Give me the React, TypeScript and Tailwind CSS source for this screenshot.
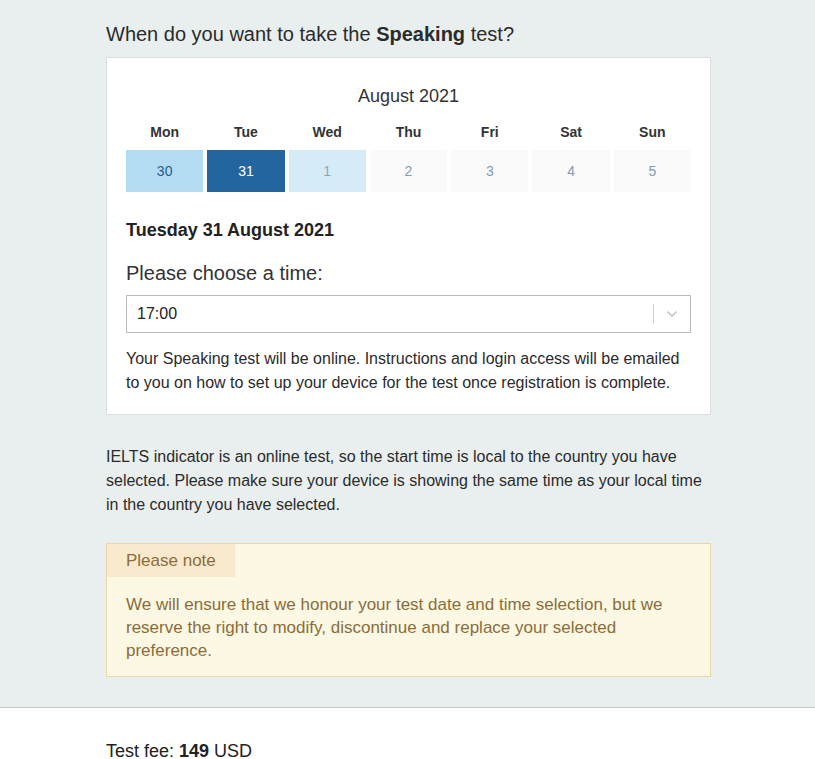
import React from "react";

const days = [
  { d: "Mon", n: "30", cls: "bg-[#b3dcf3] text-[#1f5c8f]" },
  { d: "Tue", n: "31", cls: "bg-[#23669f] text-white" },
  { d: "Wed", n: "1", cls: "bg-[#d5ebf8] text-[#8aa6bd]" },
  { d: "Thu", n: "2", cls: "bg-[#fafafa] text-[#7f9db6]" },
  { d: "Fri", n: "3", cls: "bg-[#fafafa] text-[#7f9db6]" },
  { d: "Sat", n: "4", cls: "bg-[#fafafa] text-[#7f9db6]" },
  { d: "Sun", n: "5", cls: "bg-[#fafafa] text-[#7f9db6]" },
];

export default function App() {
  return (
    <div className="w-[815px] h-[759px] overflow-hidden font-['Liberation_Sans',Arial,sans-serif] text-[#222]">
      <div className="bg-[#e9efee] border-b border-[#c5cac9] pl-[106px] pr-[104px] pt-[21px] pb-[30px]">
        <h2 className="text-[20px] leading-[26px] text-[#2b2b2b]">
          When do you want to take the <b>Speaking</b> test?
        </h2>
        <div className="mt-[10px] bg-white border border-[#dcdfdf] px-[19px] pt-[26px] pb-[19px]">
          <div className="text-center text-[18px] leading-[24px] text-[#333]">August 2021</div>
          <div className="grid grid-cols-7 gap-x-[4px] mt-[16px]">
            {days.map((x) => (
              <div key={x.d} className="text-center text-[14px] leading-[16px] font-bold text-[#333]">
                {x.d}
              </div>
            ))}
            {days.map((x) => (
              <div
                key={x.n}
                className={`mt-[10px] h-[42px] flex items-center justify-center text-[14px] ${x.cls}`}
              >
                {x.n}
              </div>
            ))}
          </div>
          <div className="mt-[27px] text-[18px] leading-[22px] font-bold text-[#222]">Tuesday 31 August 2021</div>
          <div className="mt-[20px] text-[20px] leading-[24px] text-[#333]">Please choose a time:</div>
          <div className="mt-[10px] h-[38px] border border-[#b9bcbc] flex items-center">
            <div className="flex-1 pl-[10px] text-[16px] text-[#222]">17:00</div>
            <div className="w-px h-[20px] bg-[#cfd2d2]"></div>
            <div className="w-[36px] flex items-center justify-center">
              <svg width="12" height="8" viewBox="0 0 12 8" fill="none">
                <path d="M1.5 1.5 L6 6 L10.5 1.5" stroke="#c4c7c7" strokeWidth="1.6" />
              </svg>
            </div>
          </div>
          <p className="mt-[14px] text-[16px] leading-[24px] text-[#2b2b2b]">
            Your Speaking test will be online. Instructions and login access will be emailed to you on how to set up
            your device for the test once registration is complete.
          </p>
        </div>
        <p className="mt-[30px] text-[16px] leading-[24px] text-[#2b2b2b]">
          IELTS indicator is an online test, so the start time is local to the country you have selected. Please make
          sure your device is showing the same time as your local time in the country you have selected.
        </p>
        <div className="mt-[26px] bg-[#fcf8e3] border border-[#e8d8a6]">
          <div className="inline-block bg-[#faeacd] text-[#8a6d3b] text-[17px] leading-[33px] px-[19px]">
            Please note
          </div>
          <p className="px-[19px] pt-[16px] pb-[14px] text-[17px] leading-[23px] text-[#8a6d3b]">
            We will ensure that we honour your test date and time selection, but we reserve the right to modify,
            discontinue and replace your selected preference.
          </p>
        </div>
      </div>
      <div className="bg-white pl-[106px] pt-[32px] text-[18px] leading-[22px] text-[#222]">
        Test fee: <b>149</b> USD
      </div>
    </div>
  );
}
